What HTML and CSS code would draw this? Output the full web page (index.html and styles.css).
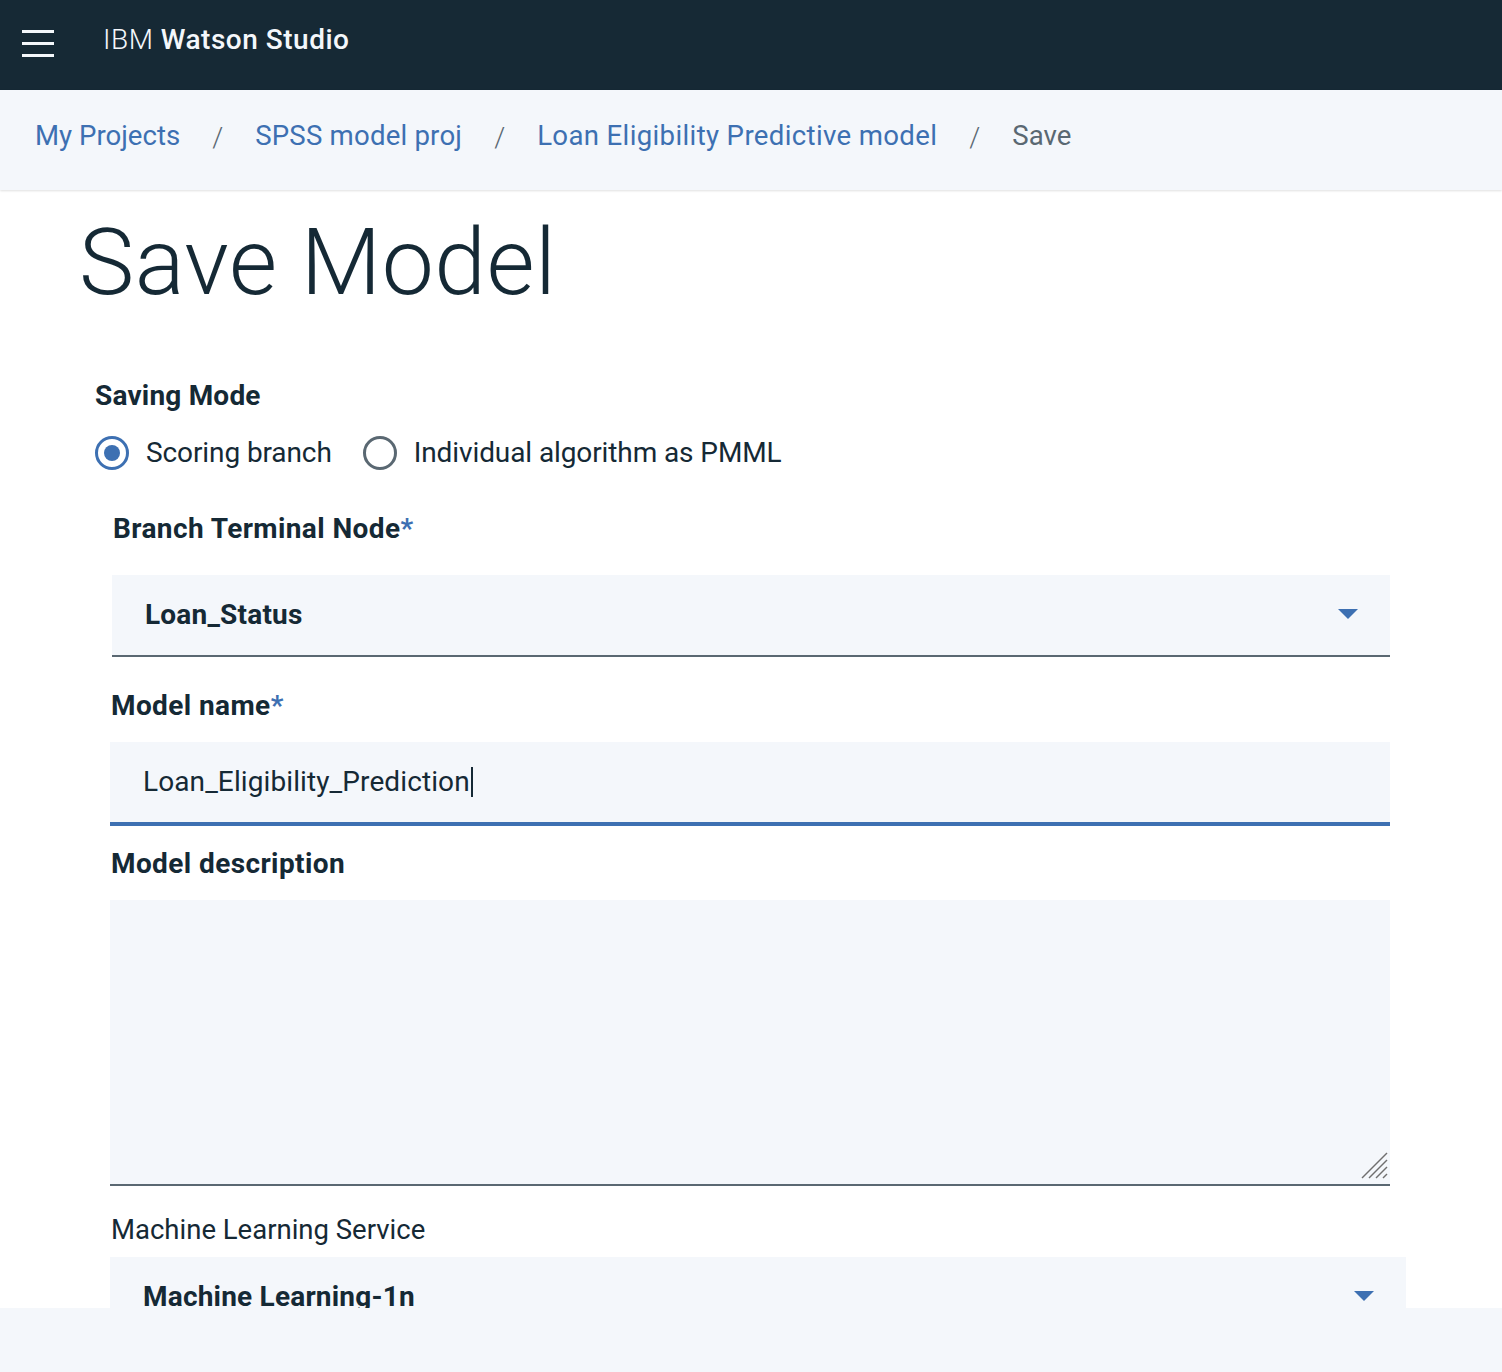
FILE: index.html
```html
<!DOCTYPE html>
<html lang="en">
<head>
<meta charset="utf-8">
<title>Save Model - IBM Watson Studio</title>
<link rel="stylesheet" href="styles.css">
</head>
<body>
<div class="page">
  <header class="topbar">
    <svg class="menu-icon" width="32" height="28" viewBox="0 0 32 28" aria-hidden="true">
      <rect x="0" y="0" width="32" height="3" fill="#f4f7fb"/>
      <rect x="0" y="12" width="32" height="3" fill="#f4f7fb"/>
      <rect x="0" y="24" width="32" height="3" fill="#f4f7fb"/>
    </svg>
    <div class="brand"><span class="brand-ibm">IBM</span> <span class="brand-product">Watson Studio</span></div>
  </header>

  <nav class="breadcrumb">
    <a class="crumb link">My Projects</a>
    <span class="sep">/</span>
    <a class="crumb link crumb-spss">SPSS model proj</a>
    <span class="sep">/</span>
    <a class="crumb link crumb-long">Loan Eligibility Predictive model</a>
    <span class="sep">/</span>
    <span class="crumb current">Save</span>
  </nav>

  <main class="content">
    <h1 class="title">Save Model</h1>

    <form class="form">
      <div class="saving-mode">
        <div class="label">Saving Mode</div>
        <div class="radio-row">
          <label class="radio">
            <span class="radio-circle checked"></span>
            <span class="radio-text">Scoring branch</span>
          </label>
          <label class="radio">
            <span class="radio-circle"></span>
            <span class="radio-text">Individual algorithm as PMML</span>
          </label>
        </div>
      </div>

      <div class="group group-branch">
        <div class="label label-branch">Branch Terminal Node<span class="req">*</span></div>
        <div class="select">
          <span class="select-value">Loan_Status</span>
          <span class="caret"></span>
        </div>
      </div>

      <div class="group">
        <div class="label label-name">Model name<span class="req">*</span></div>
        <div class="input focused"><span class="input-value">Loan_Eligibility_Prediction</span><span class="text-cursor"></span></div>
      </div>

      <div class="group">
        <div class="label label-desc">Model description</div>
        <div class="textarea-wrap">
          <div class="textarea"></div>
          <svg class="resize-handle" width="28" height="28" viewBox="0 0 28 28" aria-hidden="true">
            <line x1="1" y1="26" x2="26" y2="1" stroke="#6f6f6f" stroke-width="1.5"/>
            <line x1="8" y1="26" x2="26" y2="8" stroke="#6f6f6f" stroke-width="1.5"/>
            <line x1="15" y1="26" x2="26" y2="15" stroke="#6f6f6f" stroke-width="1.5"/>
            <line x1="22" y1="26" x2="26" y2="22" stroke="#6f6f6f" stroke-width="1.5"/>
          </svg>
        </div>
      </div>

      <div class="group">
        <div class="label-plain">Machine Learning Service</div>
        <div class="select select-wide">
          <span class="select-value">Machine Learning-1n</span>
          <span class="caret"></span>
        </div>
      </div>
    </form>
  </main>

  <footer class="bottom-strip"></footer>
</div>
</body>
</html>
```

FILE: styles.css
```css
* { box-sizing: border-box; }

html, body {
  margin: 0;
  padding: 0;
  background: #ffffff;
}

body {
  font-family: Roboto, "Liberation Sans", Arial, sans-serif;
  color: #152935;
}

.page {
  height: 1372px;
  display: flex;
  flex-direction: column;
  overflow: hidden;
}

/* Header */
.topbar {
  flex: 0 0 90px;
  background: #162935;
  display: flex;
  align-items: center;
  padding-left: 22px;
  color: #f4f7fb;
}

.menu-icon {
  display: block;
  margin-top: -2px;
}

.brand {
  margin-left: 49px;
  font-size: 28px;
  letter-spacing: 0.5px;
  margin-top: -12px;
}

.brand-ibm { font-weight: 300; }
.brand-product { font-weight: 500; }

/* Breadcrumb */
.breadcrumb {
  flex: 0 0 100px;
  background: #f4f7fb;
  box-shadow: 0 1px 2px rgba(0, 0, 0, 0.12);
  display: flex;
  align-items: center;
  padding: 0 0 10px 35px;
  font-size: 27.6px;
  position: relative;
  z-index: 1;
}

.crumb { white-space: nowrap; }
.crumb-spss { letter-spacing: 0.2px; }
.crumb-long { letter-spacing: 0.35px; }
.link { color: #3d70b2; text-decoration: none; }
.current { color: #5a6872; }

.sep {
  color: #5a6872;
  margin: 4px 32px 0 32px;
  font-weight: 300;
}

/* Content */
.content {
  flex: 1 1 auto;
  overflow: hidden;
  background: #ffffff;
}

.title {
  margin: 18px 0 0 79px;
  font-size: 93px;
  line-height: 110px;
  font-weight: 300;
  color: #152935;
  letter-spacing: 0.5px;
}

.form {
  margin: 0;
  padding-left: 110px;
  width: 1406px;
}

.label {
  font-size: 28px;
  line-height: 34px;
  font-weight: 700;
  color: #152935;
  letter-spacing: 0.4px;
}

.req { color: #3d70b2; }

.label-plain {
  font-size: 27.5px;
  line-height: 34px;
  font-weight: 400;
  color: #152935;
  margin-top: 27px;
  margin-left: 1px;
}

.saving-mode {
  margin-left: -15px;
  margin-top: 61px;
}

.saving-mode .label { letter-spacing: 0.2px; }

.radio-row {
  display: flex;
  align-items: center;
  margin-top: 23px;
  height: 34px;
}

.radio {
  display: flex;
  align-items: center;
  margin-right: 31px;
  font-size: 28px;
  line-height: 34px;
}

.radio-circle {
  width: 34px;
  height: 34px;
  border-radius: 50%;
  border: 3px solid #5a6872;
  display: flex;
  align-items: center;
  justify-content: center;
  margin-right: 17px;
  background: #fff;
}

.radio-circle.checked {
  border-color: #3d70b2;
}

.radio-circle.checked::after {
  content: "";
  width: 16px;
  height: 16px;
  border-radius: 50%;
  background: #3d70b2;
}

.radio-text { letter-spacing: -0.1px; }

.group-branch { margin-left: 2px; }

.label-branch { margin-top: 42px; margin-left: 1px; }
.label-name { margin-top: 32px; margin-left: 1px; }
.label-desc { margin-top: 21px; margin-left: 1px; }

.select {
  margin-top: 29px;
  height: 82px;
  width: 1278px;
  background: #f4f7fb;
  border-bottom: 2px solid #5a6872;
  display: flex;
  align-items: center;
  justify-content: space-between;
  padding: 0 32px 0 33px;
}

.select-value {
  font-size: 28px;
  line-height: 34px;
  font-weight: 700;
  color: #152935;
  letter-spacing: 0.2px;
}

.caret {
  width: 0;
  height: 0;
  border-left: 10px solid transparent;
  border-right: 10px solid transparent;
  border-top: 10px solid #3d70b2;
  margin-top: -2px;
}

.select-wide {
  margin-top: 10px;
  width: 1296px;
  border-bottom: none;
  height: 80px;
}

.input {
  margin-top: 19px;
  height: 84px;
  width: 1280px;
  background: #f4f7fb;
  border-bottom: 4px solid #3d70b2;
  display: flex;
  align-items: center;
  padding: 0 0 0 33px;
  font-size: 28px;
  line-height: 34px;
}

.input-value { color: #152935; font-weight: 400; letter-spacing: 0.1px; }

.text-cursor {
  display: inline-block;
  width: 2px;
  height: 30px;
  background: #152935;
  margin-left: 1px;
}

.textarea-wrap {
  position: relative;
  margin-top: 19px;
  width: 1280px;
}

.textarea {
  height: 286px;
  background: #f4f7fb;
  border-bottom: 2px solid #5a6872;
}

.resize-handle {
  position: absolute;
  right: 1px;
  bottom: 6px;
}

.bottom-strip {
  flex: 0 0 64px;
  background: #f4f7fb;
}
```
